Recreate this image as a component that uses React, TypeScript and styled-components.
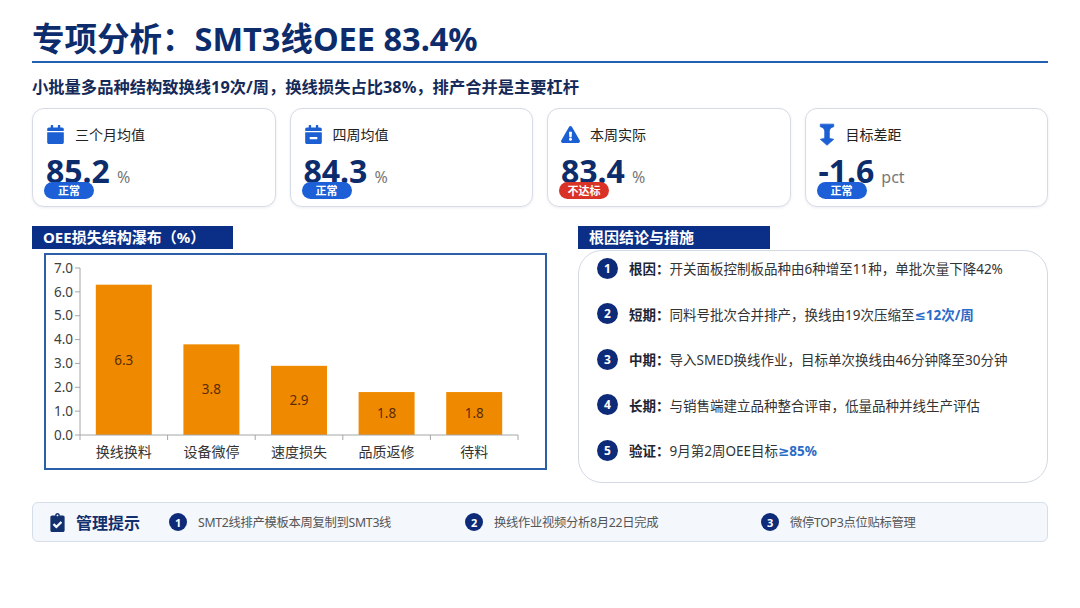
import styled, { createGlobalStyle } from "styled-components";
import {
  FaCalendar,
  FaCalendarMinus,
  FaExclamationTriangle,
  FaClipboardCheck,
} from "react-icons/fa";

const FONT = `"Noto Sans", "Noto Sans CJK SC", sans-serif`;

const GlobalStyle = createGlobalStyle`
  * { box-sizing: border-box; }
  body {
    margin: 0;
    background: #ffffff;
    font-family: ${FONT};
  }
`;

const Page = styled.div`
  width: 1080px;
  height: 608px;
  padding: 19px 32px 0;
  overflow: hidden;
  font-family: ${FONT};
`;

const Title = styled.h1`
  margin: 0;
  padding-bottom: 2px;
  font-size: 32.5px;
  line-height: 40px;
  font-weight: 700;
  color: #0d2c6c;
  border-bottom: 2px solid #2360b4;
`;

const Subtitle = styled.p`
  margin: 13px 0 0;
  font-size: 16.3px;
  line-height: 22px;
  font-weight: 700;
  color: #152a58;
`;

const CardRow = styled.div`
  display: grid;
  grid-template-columns: repeat(4, 1fr);
  gap: 14px;
  margin-top: 10px;
`;

const Card = styled.div`
  position: relative;
  height: 99px;
  padding: 15px 13px 0;
  border: 1px solid #d6dce6;
  border-radius: 12px;
  background: #fff;
  box-shadow: 0 1px 3px rgba(20, 40, 80, 0.08);
`;

const CardHead = styled.div`
  display: flex;
  align-items: center;
  gap: 10px;
  height: 20px;
  font-size: 14px;
  color: #222;

  svg {
    flex: none;
    color: #1b5fd2;
    font-size: 19px;
  }
`;

const ValueLine = styled.div`
  display: flex;
  align-items: baseline;
  gap: 7px;
  margin-top: 11px;
`;

const Value = styled.span`
  font-size: 32px;
  line-height: 32px;
  font-weight: 700;
  color: #0d2c6c;
`;

const Unit = styled.span`
  font-size: 16px;
  color: #777;
`;

const Badge = styled.span<{ $bad?: boolean }>`
  position: absolute;
  left: 11px;
  top: 73px;
  width: 50px;
  height: 17px;
  border-radius: 9px;
  background: ${(p) => (p.$bad ? "#d93226" : "#1c5fd6")};
  color: #fff;
  font-size: 11px;
  font-weight: 700;
  line-height: 17px;
  text-align: center;
`;

const Columns = styled.div`
  display: grid;
  grid-template-columns: 515px 1fr;
  gap: 31px;
  margin-top: 19px;
`;

const SectionTag = styled.div<{ $w: number }>`
  position: relative;
  width: ${(p) => p.$w}px;
  height: 23px;
  padding-left: 11px;
  background: #0b2e86;
  color: #fff;
  font-size: 15px;
  font-weight: 700;
  line-height: 23px;
`;

const ChartBox = styled.div`
  margin: 4px 0 0 12px;
  width: 503px;
  height: 217px;
  border: 2px solid #2d5ea8;
  background: #fff;

  svg {
    display: block;
  }
`;

const Panel = styled.div`
  margin-top: 1px;
  height: 233px;
  padding: 7px 18px 0;
  border: 1px solid #d3d9e3;
  border-radius: 24px;
  display: flex;
  flex-direction: column;
  gap: 25.5px;
`;

const Step = styled.div`
  display: flex;
  align-items: center;
  gap: 11px;
  height: 20px;
  font-size: 13.5px;
  color: #333;
  white-space: nowrap;
`;

const Num = styled.span<{ $size: number }>`
  flex: none;
  width: ${(p) => p.$size}px;
  height: ${(p) => p.$size}px;
  border-radius: 50%;
  background: #0d2b78;
  color: #fff;
  font-size: ${(p) => (p.$size > 19 ? 12 : 11)}px;
  font-weight: 700;
  display: flex;
  align-items: center;
  justify-content: center;
`;

const StepLabel = styled.b`
  color: #1d2433;
  font-weight: 700;
`;

const Hi = styled.b`
  color: #2b6cc8;
  font-weight: 700;
  font-family: "Noto Sans", "DejaVu Sans", "Noto Sans CJK SC", sans-serif;
`;

const TipBar = styled.div`
  display: grid;
  grid-template-columns: 121px 296px 296px 1fr;
  align-items: center;
  height: 40px;
  margin-top: 19px;
  padding: 0 15px;
  border: 1px solid #d5dde8;
  border-radius: 6px;
  background: #f4f7fc;
`;

const TipTitle = styled.div`
  display: flex;
  align-items: center;
  gap: 9px;
  font-size: 16px;
  font-weight: 700;
  color: #13306e;

  svg {
    font-size: 19px;
  }
`;

const TipItem = styled.div`
  display: flex;
  align-items: center;
  gap: 11px;
  font-size: 12.3px;
  color: #555;
  letter-spacing: -0.3px;
`;

function UpDownIcon() {
  return (
    <svg width={17} height={23} viewBox="0 0 17 24" fill="currentColor" stroke="currentColor" strokeWidth={0.8} strokeLinejoin="round">
      <path d="M1 1.2H15V3.8Q10.4 5 10.4 9V14.8Q10.4 16.6 15 17L8 23.2 1 17Q5.6 16.6 5.6 14.8V9Q5.6 5 1 3.8Z" />
    </svg>
  );
}

const cards = [
  { icon: <FaCalendar />, label: "三个月均值", value: "85.2", unit: "%", badge: "正常", bad: false },
  { icon: <FaCalendarMinus />, label: "四周均值", value: "84.3", unit: "%", badge: "正常", bad: false },
  { icon: <FaExclamationTriangle />, label: "本周实际", value: "83.4", unit: "%", badge: "不达标", bad: true },
  { icon: <UpDownIcon />, label: "目标差距", value: "-1.6", unit: "pct", badge: "正常", bad: false },
];

const bars = [
  { name: "换线换料", v: 6.3 },
  { name: "设备微停", v: 3.8 },
  { name: "速度损失", v: 2.9 },
  { name: "品质返修", v: 1.8 },
  { name: "待料", v: 1.8 },
];

const X0 = 80;
const X1 = 518;
const Y0 = 435;
const UNIT = 23.857;
const CAT = (X1 - X0) / bars.length;

function LossChart() {
  return (
    <svg width={499} height={213} viewBox="46 255 499 213" fontFamily={FONT}>
      <line x1={X0} y1={Y0 - 7 * UNIT} x2={X0} y2={Y0} stroke="#a6a6a6" />
      {[0, 1, 2, 3, 4, 5, 6, 7].map((t) => (
        <g key={t}>
          <line x1={X0 - 5} x2={X0} y1={Y0 - t * UNIT} y2={Y0 - t * UNIT} stroke="#a6a6a6" />
          <text x={73} y={Y0 - t * UNIT} dy="0.35em" textAnchor="end" fontSize={13.5} fill="#404040">
            {t.toFixed(1)}
          </text>
        </g>
      ))}
      {bars.map((b, i) => {
        const cx = X0 + CAT * (i + 0.5);
        const h = b.v * UNIT;
        return (
          <g key={b.name}>
            <rect x={cx - 28} y={Y0 - h} width={56} height={h} fill="#ef8a00" />
            <text x={cx} y={Y0 - h / 2} dy="0.35em" textAnchor="middle" fontSize={13.5} fill="#5a2c05">
              {b.v.toFixed(1)}
            </text>
            <text x={cx} y={452} dy="0.35em" textAnchor="middle" fontSize={14} fill="#333">
              {b.name}
            </text>
          </g>
        );
      })}
      <line x1={X0} y1={Y0} x2={X1} y2={Y0} stroke="#a6a6a6" />
      {bars.map((_, i) => (
        <line key={i} x1={X0 + CAT * i} x2={X0 + CAT * i} y1={Y0} y2={Y0 + 5} stroke="#a6a6a6" />
      ))}
      <line x1={X1} x2={X1} y1={Y0} y2={Y0 + 5} stroke="#a6a6a6" />
    </svg>
  );
}

export default function App() {
  return (
    <Page>
      <GlobalStyle />
      <Title>专项分析：SMT3线OEE 83.4%</Title>
      <Subtitle>小批量多品种结构致换线19次/周，换线损失占比38%，排产合并是主要杠杆</Subtitle>

      <CardRow>
        {cards.map((c) => (
          <Card key={c.label}>
            <CardHead>
              {c.icon}
              {c.label}
            </CardHead>
            <ValueLine>
              <Value>{c.value}</Value>
              <Unit>{c.unit}</Unit>
            </ValueLine>
            <Badge $bad={c.bad}>{c.badge}</Badge>
          </Card>
        ))}
      </CardRow>

      <Columns>
        <div>
          <SectionTag $w={201}>OEE损失结构瀑布（%）</SectionTag>
          <ChartBox>
            <LossChart />
          </ChartBox>
        </div>
        <div>
          <SectionTag $w={192}>根因结论与措施</SectionTag>
          <Panel>
            <Step>
              <Num $size={21}>1</Num>
              <span>
                <StepLabel>根因：</StepLabel>开关面板控制板品种由6种增至11种，单批次量下降42%
              </span>
            </Step>
            <Step>
              <Num $size={21}>2</Num>
              <span>
                <StepLabel>短期：</StepLabel>同料号批次合并排产，换线由19次压缩至<Hi>≤12次/周</Hi>
              </span>
            </Step>
            <Step>
              <Num $size={21}>3</Num>
              <span>
                <StepLabel>中期：</StepLabel>导入SMED换线作业，目标单次换线由46分钟降至30分钟
              </span>
            </Step>
            <Step>
              <Num $size={21}>4</Num>
              <span>
                <StepLabel>长期：</StepLabel>与销售端建立品种整合评审，低量品种并线生产评估
              </span>
            </Step>
            <Step>
              <Num $size={21}>5</Num>
              <span>
                <StepLabel>验证：</StepLabel>9月第2周OEE目标<Hi>≥85%</Hi>
              </span>
            </Step>
          </Panel>
        </div>
      </Columns>

      <TipBar>
        <TipTitle>
          <FaClipboardCheck />
          管理提示
        </TipTitle>
        <TipItem>
          <Num $size={18}>1</Num>
          SMT2线排产模板本周复制到SMT3线
        </TipItem>
        <TipItem>
          <Num $size={18}>2</Num>
          换线作业视频分析8月22日完成
        </TipItem>
        <TipItem>
          <Num $size={18}>3</Num>
          微停TOP3点位贴标管理
        </TipItem>
      </TipBar>
    </Page>
  );
}
